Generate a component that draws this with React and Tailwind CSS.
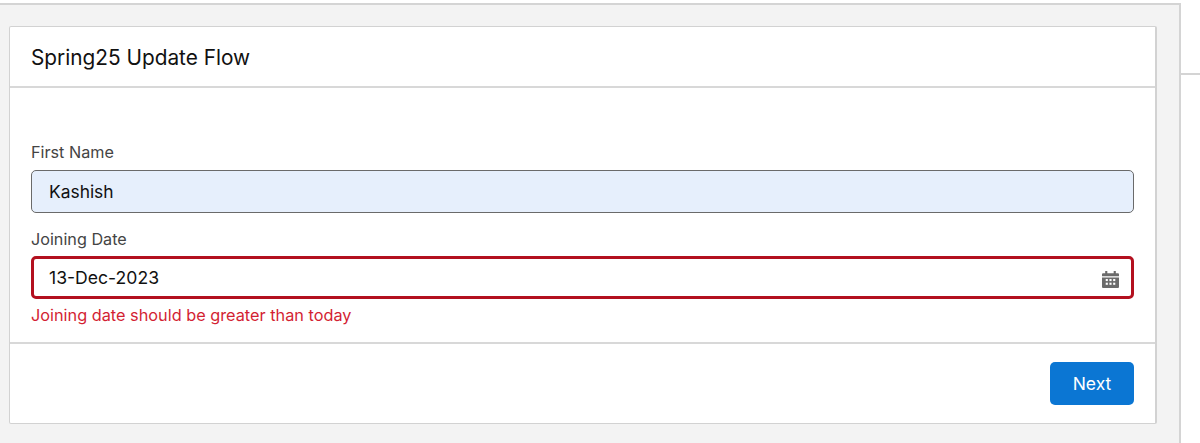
export default function App() {
  return (
    <div className="flex h-[443px] w-[1200px] overflow-hidden bg-white font-['Inter',sans-serif]">
      <div className="mt-[3px] h-[440px] w-[1181px] border-t-2 border-r-2 border-[#d4d4d4] bg-[#f3f3f3] pt-[21px] pl-[9px]">
        <div className="flex h-[398px] w-[1148px] flex-col rounded-[2px] border border-r-2 border-[#d2d2d2] bg-white">
          <div className="flex h-[61px] items-center border-b-2 border-[#d8d8d8] pt-[2px] pl-[21px] text-[20.8px] text-[#111111]">
            Spring25 Update Flow
          </div>
          <div className="h-[256px] border-b-2 border-[#d8d8d8] pt-[54px] pr-[21px] pl-[21px]">
            <label className="block text-[16.2px] leading-[20px] text-[#444444]">First Name</label>
            <div className="mt-[8px] flex h-[43px] w-[1103px] items-center rounded-[5px] border border-[#6a6a6a] bg-[#e6effc] pt-[1px] pl-[17px] text-[17.4px] text-[#111111]">
              Kashish
            </div>
            <label className="mt-[16px] block text-[16.2px] leading-[20px] text-[#444444]">Joining Date</label>
            <div className="mt-[7px] flex h-[43px] w-[1103px] items-center justify-between rounded-[5px] border-[3px] border-[#b3101f] bg-white pt-[1px] pr-[12px] pl-[15px] text-[17.6px] text-[#111111]">
              <span>13-Dec-2023</span>
              <svg className="mt-[2px]" width="17" height="17" viewBox="1 1 16 16" fill="#6b6b6b">
                <rect x="4" y="1" width="2" height="3" />
                <rect x="12" y="1" width="2" height="3" />
                <path d="M2 3h14a1 1 0 0 1 1 1v2H1V4a1 1 0 0 1 1-1zM1 7h16v9a1 1 0 0 1-1 1H2a1 1 0 0 1-1-1z" />
                <g fill="#ffffff">
                  <rect x="4.5" y="8.5" width="2" height="2" />
                  <rect x="8" y="8.5" width="2" height="2" />
                  <rect x="11.5" y="8.5" width="2" height="2" />
                  <rect x="4.5" y="12" width="2" height="2" />
                  <rect x="8" y="12" width="2" height="2" />
                  <rect x="11.5" y="12" width="2" height="2" />
                </g>
              </svg>
            </div>
            <p className="mt-[6px] text-[16.3px] leading-[20px] text-[#d31f33]">Joining date should be greater than today</p>
          </div>
          <div className="flex flex-1 items-start justify-end pt-[18px] pr-[21px]">
            <button className="h-[43px] w-[84px] rounded-[5px] bg-[#0b76d3] pt-[2px] text-[17.5px] text-white">Next</button>
          </div>
        </div>
      </div>
      <div className="flex-1">
        <div className="mt-[73px] border-b-2 border-[#d4d4d4]" />
      </div>
    </div>
  );
}
